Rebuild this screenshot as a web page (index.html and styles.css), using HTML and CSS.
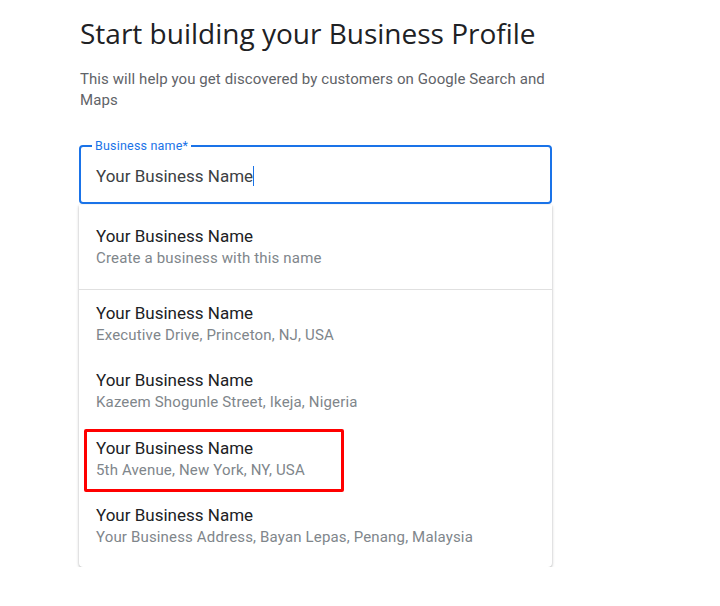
FILE: index.html
```html
<!DOCTYPE html>
<html>
<head>
<meta charset="utf-8">
<link rel="stylesheet" href="styles.css">
</head>
<body>
<div class="page">
  <h1 class="title">Start building your Business Profile</h1>
  <p class="subtitle">This will help you get discovered by customers on Google Search and Maps</p>
  <div class="field">
    <span class="label">Business name*</span>
    <span class="value">Your Business Name<span class="caret"></span></span>
  </div>
  <div class="dropdown">
    <div class="item first">
      <div class="name">Your Business Name</div>
      <div class="sub">Create a business with this name</div>
    </div>
    <div class="item">
      <div class="name">Your Business Name</div>
      <div class="sub">Executive Drive, Princeton, NJ, USA</div>
    </div>
    <div class="item">
      <div class="name">Your Business Name</div>
      <div class="sub">Kazeem Shogunle Street, Ikeja, Nigeria</div>
    </div>
    <div class="item marked">
      <div class="name">Your Business Name</div>
      <div class="sub">5th Avenue, New York, NY, USA</div>
      <span class="highlight"></span>
    </div>
    <div class="item">
      <div class="name">Your Business Name</div>
      <div class="sub">Your Business Address, Bayan Lepas, Penang, Malaysia</div>
    </div>
  </div>
</div>
</body>
</html>
```
FILE: styles.css
```css
html, body {
  margin: 0;
  padding: 0;
  background: #ffffff;
}
body {
  font-family: Roboto, "Liberation Sans", sans-serif;
}
.page {
  width: 473px;
  margin-left: 79px;
  padding-top: 15px;
}
.title {
  margin: 0;
  font-family: "Open Sans", Roboto, sans-serif;
  font-weight: 400;
  font-size: 28px;
  line-height: 36px;
  color: #202124;
  padding-left: 1px;
}
.subtitle {
  margin: 18px 0 0 0;
  padding-left: 1px;
  font-size: 15px;
  line-height: 21px;
  letter-spacing: 0.08px;
  color: #5f6368;
}
.field {
  position: relative;
  margin-top: 34px;
  height: 53px;
  border: 2px solid #1a73e8;
  border-radius: 4px;
  display: flex;
  align-items: center;
  padding-left: 15px;
  padding-top: 2px;
  box-sizing: content-box;
}
.label {
  position: absolute;
  top: -9px;
  left: 11px;
  padding: 0 3px;
  background: #ffffff;
  font-size: 12.5px;
  line-height: 16px;
  letter-spacing: 0.2px;
  color: #1a73e8;
}
.value {
  font-size: 17px;
  line-height: 24px;
  color: #3c4043;
  display: inline-flex;
  align-items: center;
}
.caret {
  display: inline-block;
  width: 1px;
  height: 20px;
  background: #1a73e8;
}
.dropdown {
  margin-top: 1px;
  background: #ffffff;
  border-radius: 0 0 4px 4px;
  box-shadow: 0 1px 3px rgba(60, 64, 67, 0.3), 0 1px 2px rgba(60, 64, 67, 0.15);
  padding-bottom: 7px;
}
.item {
  position: relative;
  height: 67.5px;
  display: flex;
  flex-direction: column;
  justify-content: center;
  padding-left: 17px;
}
.item.first {
  height: 85px;
  border-bottom: 1px solid #e0e0e0;
  padding-bottom: 1px;
  box-sizing: border-box;
}
.name {
  font-size: 17px;
  line-height: 23px;
  color: #202124;
}
.sub {
  font-size: 15px;
  line-height: 21px;
  letter-spacing: 0.16px;
  color: #80868b;
}
.highlight {
  position: absolute;
  left: 5px;
  top: 4px;
  width: 254px;
  height: 57px;
  border: 3px solid #ff0000;
  border-radius: 2px;
}
```
